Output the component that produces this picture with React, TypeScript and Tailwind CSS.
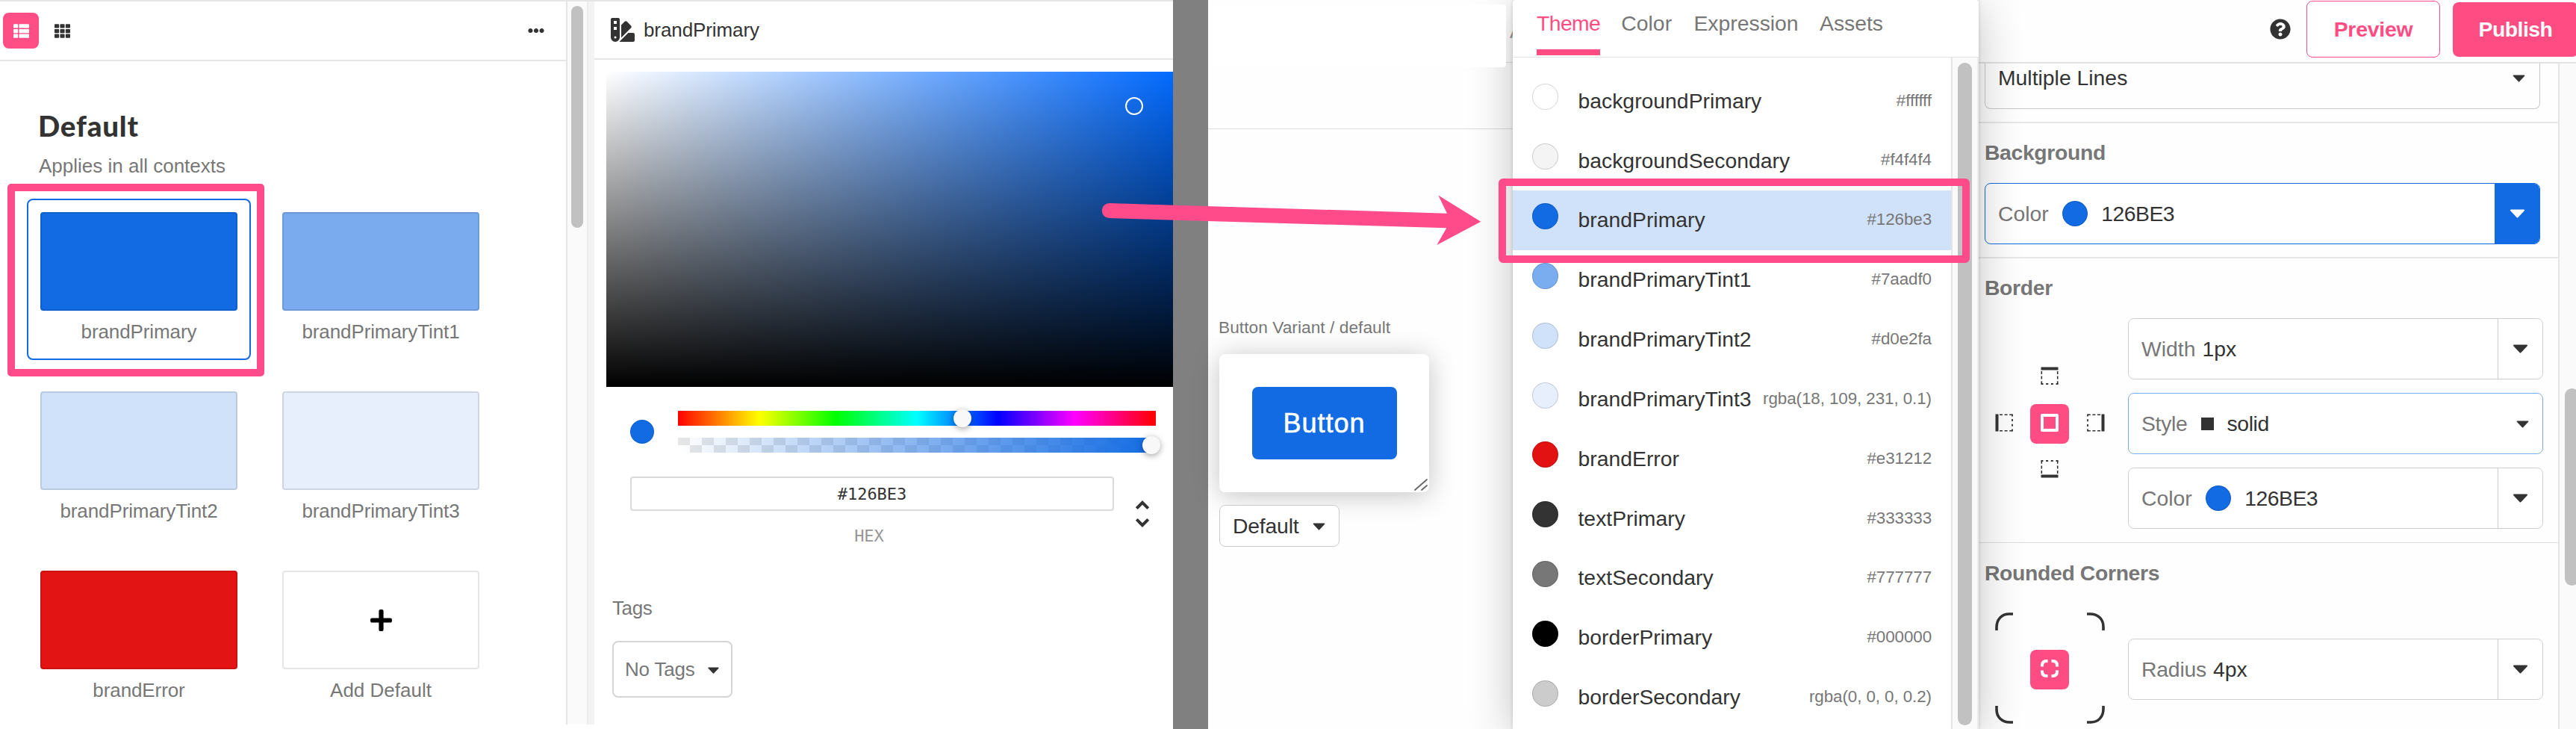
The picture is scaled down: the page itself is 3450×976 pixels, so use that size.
import React from "react";
import { FaEllipsisH, FaPlus, FaQuestionCircle, FaSwatchbook, FaTh, FaThList } from "react-icons/fa";

const SWATCHES = [
  { name: "brandPrimary", fill: "bg-[#126be3]", selected: true },
  { name: "brandPrimaryTint1", fill: "bg-[#7aabee]" },
  { name: "brandPrimaryTint2", fill: "bg-[#d0e2fa]" },
  { name: "brandPrimaryTint3", fill: "bg-[#e7effd]" },
  { name: "brandError", fill: "bg-[#e31414]" },
];

const THEME_COLORS = [
  { name: "backgroundPrimary", value: "#ffffff", fill: "bg-white" },
  { name: "backgroundSecondary", value: "#f4f4f4", fill: "bg-[#f4f4f4]" },
  { name: "brandPrimary", value: "#126be3", fill: "bg-[#126be3]", active: true },
  { name: "brandPrimaryTint1", value: "#7aadf0", fill: "bg-[#7aadf0]" },
  { name: "brandPrimaryTint2", value: "#d0e2fa", fill: "bg-[#d0e2fa]" },
  { name: "brandPrimaryTint3", value: "rgba(18, 109, 231, 0.1)", fill: "bg-[#e7effd]" },
  { name: "brandError", value: "#e31212", fill: "bg-[#e31212]" },
  { name: "textPrimary", value: "#333333", fill: "bg-[#333333]" },
  { name: "textSecondary", value: "#777777", fill: "bg-[#777777]" },
  { name: "borderPrimary", value: "#000000", fill: "bg-black" },
  { name: "borderSecondary", value: "rgba(0, 0, 0, 0.2)", fill: "bg-[#cccccc]" },
];

function Caret({ className }: { className: string }) {
  return (
    <svg viewBox="0 0 20 12" className={`shrink-0 ${className}`}>
      <path d="M1.5 1.5h17L10 10.5z" fill="currentColor" stroke="currentColor" strokeWidth="2" strokeLinejoin="round" />
    </svg>
  );
}

function Swatch({ name, fill, selected }: { name: string; fill: string; selected?: boolean }) {
  return (
    <div
      className={`flex h-[216px] w-[300px] flex-col items-center rounded-lg border-2 pt-4 ${
        selected ? "border-[#126be3]" : "border-transparent"
      }`}
    >
      <div className={`h-[132px] w-[264px] rounded border-2 border-black/10 ${fill}`} />
      <div className="mt-3 text-[26px] leading-8 tracking-[-0.1px] text-[#777]">{name}</div>
    </div>
  );
}

function ThemePanel() {
  return (
    <div className="flex w-[760px] flex-col border-r-2 border-[#e5e5e5]">
      <div className="flex h-20 items-center border-b-2 border-[#e5e5e5] pl-1 pr-[29px]">
        <div className="flex size-12 items-center justify-center rounded-lg bg-[#ff4d85] text-white">
          <FaThList className="size-[21px]" />
        </div>
        <FaTh className="ml-[21px] size-[21px] text-[#333]" />
        <FaEllipsisH className="ml-auto size-[22px] text-[#333]" />
      </div>
      <h1 className="ml-[51px] mt-[62px] font-['Lato'] text-[38.5px] font-black leading-[48px] tracking-[0.8px] text-[#333]">Default</h1>
      <p className="ml-[52px] mt-[14px] text-[26px] leading-8 text-[#777]">Applies in all contexts</p>
      <div className="ml-9 mt-7 grid grid-cols-[300px_300px] gap-x-6 gap-y-6">
        {SWATCHES.map((s) => (
          <Swatch key={s.name} {...s} />
        ))}
        <div className="flex h-[216px] w-[300px] flex-col items-center pt-[18px]">
          <div className="flex h-[132px] w-[264px] items-center justify-center rounded border-2 border-[#e5e5e5]">
            <FaPlus className="size-[33px] text-black" />
          </div>
          <div className="mt-3 text-[26px] leading-8 text-[#777]">Add Default</div>
        </div>
      </div>
    </div>
  );
}

function ColorEditor() {
  return (
    <div className="flex w-[775px] flex-col overflow-hidden">
      <div className="flex h-[78px] shrink-0 items-center border-b-2 border-[#e5e5e5] pl-[22px]">
        <FaSwatchbook className="size-8 text-[#333]" />
        <span className="ml-3 text-[26px] leading-8 tracking-[-0.1px] text-[#333]">brandPrimary</span>
      </div>
      <div className="relative ml-4 mt-4 h-[422px] w-[768px] shrink-0 rounded-tl bg-[#0069ff] bg-[linear-gradient(to_top,#000,transparent),linear-gradient(to_right,#fff,transparent)]">
        <div className="absolute left-[695px] top-[34px] size-6 rounded-full border-2 border-white" />
      </div>
      <div className="ml-12 mt-8 flex items-center">
        <div className="size-8 rounded-full border border-black/10 bg-[#126be3]" />
        <div className="ml-8 flex w-[640px] flex-col gap-4">
          <div className="relative h-5 bg-[linear-gradient(to_right,#f00_0%,#ff0_17%,#0f0_33%,#0ff_50%,#00f_67%,#f0f_83%,#f00_100%)]">
            <div className="absolute left-[369px] top-[-2px] size-6 rounded-full bg-[#f8f8f8] shadow-[0_2px_8px_rgba(0,0,0,0.37)]" />
          </div>
          <div className="relative h-5 bg-[linear-gradient(to_right,rgba(18,107,227,0),rgb(18,107,227)),repeating-conic-gradient(#fff_0_25%,#e6e6e6_0_50%)] bg-[length:100%_100%,32px_20px]">
            <div className="absolute left-[622px] top-[-2px] size-6 rounded-full bg-[#f8f8f8] shadow-[0_2px_8px_rgba(0,0,0,0.37)]" />
          </div>
        </div>
      </div>
      <div className="ml-12 mt-8 flex">
        <div className="flex w-[648px] flex-col font-['DejaVu_Sans_Mono'] text-[22px]">
          <div className="flex h-[46px] items-center justify-center rounded border-2 border-[#dadada] text-[#333]">#126BE3</div>
          <div className="mt-[22px] pr-2 text-center leading-6 text-[#969696]">HEX</div>
        </div>
        <svg viewBox="0 0 24 24" className="ml-[14px] mt-[26px] size-12 text-[#333]">
          <path
            fill="currentColor"
            d="M12,18.17L8.83,15L7.42,16.41L12,21L16.59,16.41L15.17,15M12,5.83L15.17,9L16.58,7.59L12,3L7.41,7.59L8.83,9L12,5.83Z"
          />
        </svg>
      </div>
      <div className="ml-6 mt-[68px] text-[26px] leading-8 tracking-[-0.4px] text-[#777]">Tags</div>
      <div className="ml-6 mt-7 flex h-[76px] w-[161px] items-center rounded-lg border-2 border-[#d5d5d5] pl-[15px]">
        <span className="text-[26px] leading-8 tracking-[-0.2px] text-[#777]">No Tags</span>
        <Caret className="ml-[17px] mt-[3px] h-[9px] w-[15px] text-[#333]" />
      </div>
    </div>
  );
}

function Canvas() {
  return (
    <div className="flex w-[408px] flex-col bg-[#fefefe]">
      <div className="flex h-[173px] shrink-0 items-start border-b border-[#dcdcdc]">
        <div className="relative z-20 mt-[6px] h-[84px] w-[399px] rounded-r bg-white" />
        <div className="h-[84px] w-[9px] overflow-hidden border-b border-[#dcdcdc] pl-[5px] pt-[26px] text-[26px] leading-8 text-[#999]">A</div>
      </div>
      <div className="ml-[14px] mt-[251px] w-[240px] text-[22.68px] leading-7 tracking-[0.05px] text-[#777]">Button Variant / default</div>
      <div className="relative ml-[15px] mt-[22px] flex h-[185px] w-[281px] shrink-0 items-center justify-center rounded-lg bg-white shadow-[0_4px_36px_rgba(0,0,0,0.24)]">
        <div className="flex h-[97px] w-[194px] items-center justify-center rounded-lg bg-[#126be3] text-[36px] tracking-[1px] text-white [-webkit-text-stroke:0.6px_white]">
          Button
        </div>
        <svg viewBox="0 0 20 18" className="absolute bottom-0 right-0 h-[18px] w-5">
          <path d="M1 15 17 1M10 15l7-6" fill="none" stroke="#666" strokeWidth="1.8" strokeLinecap="round" />
        </svg>
      </div>
      <div className="relative ml-[15px] mt-[17px] flex h-14 w-[161px] shrink-0 items-center rounded-lg border border-[#ccc] bg-white pl-[17px] text-[28.35px] text-[#333]">
        <span className="tracking-[-0.2px]">Default</span>
        <Caret className="ml-[19px] mt-[2px] h-[10px] w-[17px]" />
      </div>
    </div>
  );
}

function ColorMenu() {
  return (
    <div className="relative z-10 flex w-[624px] flex-col rounded-t bg-white shadow-[0_0_5px_rgba(0,0,0,0.16),0_8px_60px_rgba(0,0,0,0.24)]">
      <div className="flex h-[77px] shrink-0 gap-[28.35px] border-b border-[#e2e2e2] pl-8 text-[28.35px] leading-[62px] text-[#777]">
        <div className="h-[74px] w-[85px] whitespace-nowrap border-b-[8px] border-[#ff4d83] tracking-[-0.6px] text-[#ff4d83]">Theme</div>
        <div>Color</div>
        <div className="ml-px">Expression</div>
        <div>Assets</div>
      </div>
      <div className="flex min-h-0 flex-1">
        <div className="w-[587px] shrink-0 pt-[18px]">
          {THEME_COLORS.map((c) => (
            <div key={c.name} className={`flex h-[79.85px] items-center pl-[26px] pr-[26px] ${c.active ? "bg-[#d0e1fa]" : ""}`}>
              <div className={`mb-[10px] size-[35px] shrink-0 rounded-full border border-black/15 ${c.fill}`} />
              <span className="ml-[26.5px] text-[28.35px] text-[#333]">{c.name}</span>
              <span className="mb-[1px] ml-auto whitespace-nowrap text-[22.4px] tracking-[-0.08px] text-[#777]">{c.value}</span>
            </div>
          ))}
        </div>
        <div className="flex w-[35px] justify-center border-l-2 border-[#e5e5e5] bg-[#fafafa] pt-[7px]">
          <div className="h-[887px] w-[19px] rounded-full bg-[#c1c1c1]" />
        </div>
        <div className="w-[2px] bg-[#ececec]" />
      </div>
    </div>
  );
}

function Field({ children, tone = "border-[#cfcfcf]", split = true }: { children: React.ReactNode; tone?: string; split?: boolean }) {
  return (
    <div className={`flex h-[82px] w-[556px] shrink-0 items-center rounded-lg border bg-white pl-[17px] text-[28.35px] text-[#333] ${tone}`}>
      {children}
      {split ? (
        <div className="ml-auto flex h-full w-[60px] items-center justify-center border-l border-[#cfcfcf]">
          <Caret className="h-[12px] w-[21px]" />
        </div>
      ) : (
        <Caret className="ml-auto mr-[18px] mt-[2px] h-[10px] w-[17px]" />
      )}
    </div>
  );
}

function SideIcon({ turn }: { turn: string }) {
  return (
    <svg viewBox="0 0 24 24" className={`size-6 ${turn}`}>
      <path d="M.5 2.5h23" stroke="#333" strokeWidth="4" />
      <path d="M1.3 6v17M22.7 6v17" stroke="#333" strokeWidth="1.6" strokeDasharray="4 2.6" />
      <path d="M.5 23h23" stroke="#333" strokeWidth="1.8" strokeDasharray="3 3.7" />
    </svg>
  );
}

function CornerIcon({ turn }: { turn: string }) {
  return (
    <svg viewBox="0 0 24 24" className={`size-6 ${turn}`}>
      <path d="M2 24v-4C2 9 9 2 19 2h5" fill="none" stroke="#333" strokeWidth="3.6" />
    </svg>
  );
}

function IconPad({ icons }: { icons: React.ReactNode[] }) {
  return (
    <div className="ml-[3px] grid h-[187.5px] w-[184.5px] shrink-0 grid-cols-[61.5px_61.5px_61.5px] grid-rows-[62.5px_62.5px_62.5px] place-items-center">
      {icons.map((icon, i) => (
        <div key={i} className="flex">
          {icon}
        </div>
      ))}
    </div>
  );
}

const heading = "pl-2 text-[28.35px] font-bold leading-10 tracking-[-0.35px] text-[#777]";

function StylePanel() {
  return (
    <div className="flex w-[800px] shrink-0 flex-col overflow-hidden bg-[#fefefe]">
      <div className="flex h-[85px] shrink-0 items-start border-b-2 border-[#e2e2e2] pl-[390px]">
        <div className="flex h-[78px] items-center">
          <FaQuestionCircle className="size-7 shrink-0 text-[#333]" />
          <div className="ml-[21px] flex h-[76px] w-[179px] shrink-0 items-center justify-center rounded-lg border border-[#ff4d83] bg-white text-[28.35px] font-bold tracking-[-0.2px] text-[#ff4d83]">
            Preview
          </div>
          <div className="ml-[17px] flex h-[73px] w-[168px] shrink-0 items-center justify-center rounded-lg bg-[#ff4d83] text-[28.35px] font-bold tracking-[-0.5px] text-white">
            Publish
          </div>
        </div>
      </div>
      <div className="flex min-h-0 flex-1">
        <div className="flex w-[776px] shrink-0 flex-col overflow-hidden">
          <div className="h-20 shrink-0 border-b-2 border-[#e7e7e7] pl-2">
            <div className="flex h-[61px] w-[744px] items-center rounded-b-lg border-x border-b border-[#c8c8c8] pb-[22px] pl-[17px] pr-[19px] text-[28.35px] text-[#333]">
              Multiple Lines
              <Caret className="ml-auto mt-[2px] h-[10px] w-[17px]" />
            </div>
          </div>
          <div className="h-[181px] shrink-0 border-b-2 border-[#e7e7e7] pt-[19px]">
            <h2 className={heading}>Background</h2>
            <div className="ml-2 mt-[21px] flex h-[82px] w-[744px] items-center overflow-hidden rounded-lg border border-[#126be3] bg-white pl-[17px] text-[28.35px] text-[#333]">
              <span className="text-[#777]">Color</span>
              <div className="ml-[18px] size-[34px] rounded-full border border-black/15 bg-[#126be3]" />
              <span className="ml-[18.5px] tracking-[-0.5px]">126BE3</span>
              <div className="ml-auto flex h-full w-[60px] items-center justify-center bg-[#126be3] text-white">
                <Caret className="h-[12px] w-[21px]" />
              </div>
            </div>
          </div>
          <div className="h-[381px] shrink-0 border-b border-[#dedede] pt-[19px]">
            <h2 className={heading}>Border</h2>
            <div className="mt-[21px] flex h-[282px]">
              <div className="mt-[46px]">
                <IconPad
                  icons={[
                    null,
                    <SideIcon turn="" />,
                    null,
                    <SideIcon turn="-rotate-90" />,
                    <div className="mt-[3px] flex h-[53px] w-[52px] items-center justify-center rounded-lg bg-[#ff4d83] pb-[3px]">
                      <div className="size-6 rounded-[2px] border-4 border-white" />
                    </div>,
                    <SideIcon turn="rotate-90" />,
                    null,
                    <SideIcon turn="rotate-180" />,
                    null,
                  ]}
                />
              </div>
              <div className="ml-[12.5px] flex flex-col gap-[18px]">
                <Field>
                  <span className="text-[#777]">Width</span>
                  <span className="ml-[9px]">1px</span>
                </Field>
                <Field tone="border-[#7aadf0]" split={false}>
                  <span className="tracking-[-0.3px] text-[#777]">Style</span>
                  <div className="ml-[18px] size-[17px] bg-[#333]" />
                  <span className="ml-[18px] tracking-[-0.4px]">solid</span>
                </Field>
                <Field>
                  <span className="text-[#777]">Color</span>
                  <div className="ml-[18px] size-[34px] rounded-full border border-black/15 bg-[#126be3]" />
                  <span className="ml-[18.5px] tracking-[-0.5px]">126BE3</span>
                </Field>
              </div>
            </div>
          </div>
          <div className="shrink-0 pt-5">
            <h2 className={heading}>Rounded Corners</h2>
            <div className="mt-[14px] flex items-center">
              <IconPad
                icons={[
                  <CornerIcon turn="" />,
                  null,
                  <CornerIcon turn="rotate-90" />,
                  null,
                  <div className="mt-[3px] flex h-[53px] w-[52px] items-center justify-center rounded-lg bg-[#ff4d83] pb-[3px]">
                    <svg viewBox="0 0 24 24" className="size-6">
                      <path
                        d="M2 9.5V8q0-6 6-6h1.500M14.500 2H16q6 0 6 6v1.500M22 14.500V16q0 6-6 6h-1.500M9.500 22H8q-6 0-6-6v-1.500"
                        fill="none"
                        stroke="#fff"
                        strokeWidth="4"
                      />
                    </svg>
                  </div>,
                  null,
                  <CornerIcon turn="-rotate-90" />,
                  null,
                  <CornerIcon turn="rotate-180" />,
                ]}
              />
              <div className="ml-[12.5px] mt-[3px]">
                <Field>
                  <span className="tracking-[-0.2px] text-[#777]">Radius</span>
                  <span className="ml-[9px]">4px</span>
                </Field>
              </div>
            </div>
          </div>
        </div>
        <div className="w-6 shrink-0 overflow-hidden border-l-2 border-[#e5e5e5] bg-[#fafafa] pl-[7px] pt-[435px]">
          <div className="h-[264px] w-[19px] rounded-full bg-[#c1c1c1]" />
        </div>
      </div>
    </div>
  );
}

export default function App() {
  return (
    <div className="relative flex h-[976px] w-[3450px] overflow-hidden whitespace-nowrap bg-white font-['Liberation_Sans',Arial,sans-serif]">
      <div className="flex w-[1571px] shrink-0 border-t-2 border-[#e5e5e5]">
        <div className="flex h-[968px]">
          <ThemePanel />
          <div className="flex w-[26px] justify-center bg-[#fafafa] pt-[6px]">
            <div className="h-[297px] w-4 rounded-full bg-[#c1c1c1]" />
          </div>
          <div className="w-[10px] border-l-2 border-[#ececec] bg-[#f3f3f3]" />
        </div>
        <ColorEditor />
      </div>
      <div className="w-[47px] shrink-0 bg-[#808080]" />
      <Canvas />
      <ColorMenu />
      <StylePanel />

      <div className="absolute left-[10px] top-[246px] z-20 h-[258px] w-[344px] rounded-[5px] border-[10px] border-[#ff4b89]" />
      <div className="absolute left-[2007px] top-[239px] z-20 h-[113px] w-[631px] rounded-[6px] border-[10px] border-[#ff4b89]" />
      <svg viewBox="1470 255 520 80" className="absolute left-[1470px] top-[255px] z-20 h-[80px] w-[520px]">
        <path
          d="M1486 272 1938 285.700 1926.300 261.400 1983.300 296.800 1924.300 328 1937.300 305.300 1485.500 292A10 10 0 0 1 1486 272Z"
          fill="#ff4b89"
        />
      </svg>
    </div>
  );
}
